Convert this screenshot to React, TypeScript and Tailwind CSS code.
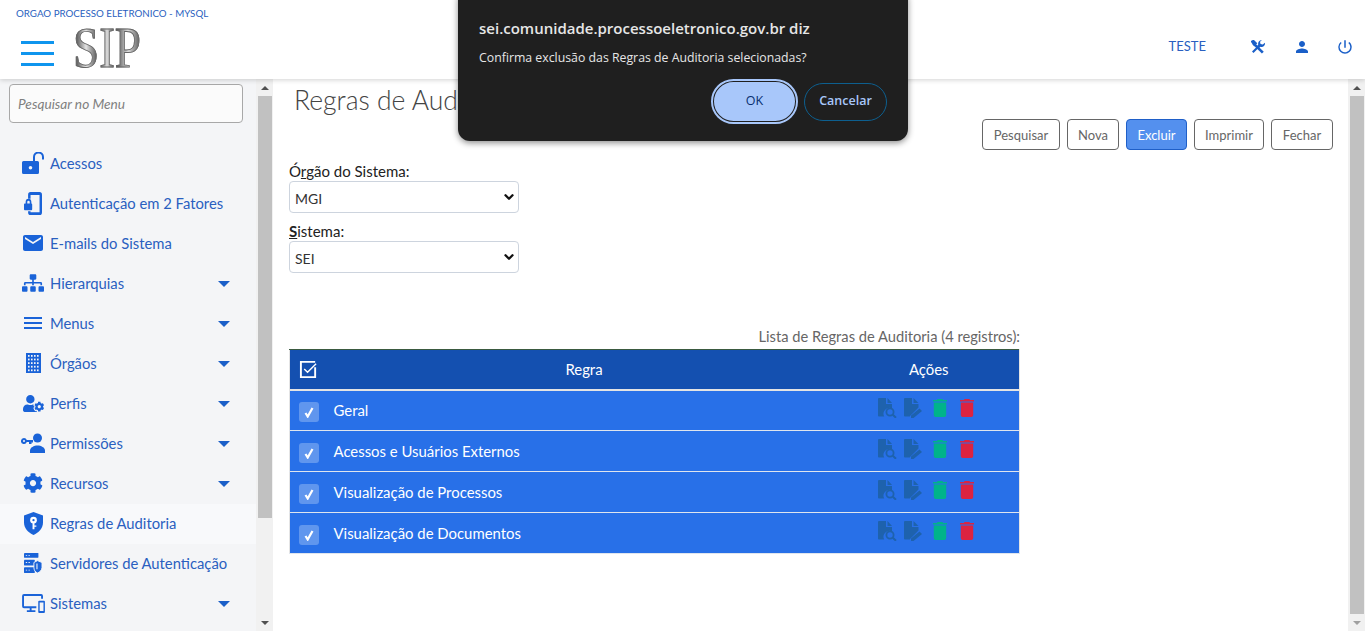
import { ReactNode } from 'react'
import { FaCog, FaSitemap, FaUserCog } from 'react-icons/fa'
import { MdEmail, MdMenu, MdPerson, MdPowerSettingsNew } from 'react-icons/md'
import { ChevronDown } from 'lucide-react'

const font = "font-['Lato','Open_Sans',sans-serif]"

function LockOpen() {
  return (
    <svg viewBox="0 0 22 22" className="w-[22px] h-[22px]" fill="#1a63d8">
      <path fillRule="evenodd" d="M1.500 9h14a1.500 1.500 0 0 1 1.500 1.500v10a1.500 1.500 0 0 1-1.500 1.500h-14A1.500 1.500 0 0 1 0 20.500v-10A1.500 1.500 0 0 1 1.500 9zm7 5a1.800 1.800 0 1 0 0 3.600 1.800 1.800 0 0 0 0-3.600z" />
      <path d="M11 9V5a5.500 5.500 0 0 1 11 0v2.500h-2V5a3.500 3.500 0 0 0-7 0v4z" />
    </svg>
  )
}

function PhoneLock() {
  return (
    <svg viewBox="0 0 22 24" className="w-[18px] h-[23px]" preserveAspectRatio="none" fill="#1a63d8">
      <path d="M8 0h11a3 3 0 0 1 3 3v18a3 3 0 0 1-3 3H8a3 3 0 0 1-3-3v-1h3v1h11V3H8v4H5V3a3 3 0 0 1 3-3z" />
      <path d="M2 12V10.500a3.500 3.500 0 0 1 7 0V12a1 1 0 0 1 1 1v5a1 1 0 0 1-1 1H1a1 1 0 0 1-1-1v-5a1 1 0 0 1 1-1zm2 0h3v-1.500a1.500 1.500 0 0 0-3 0z" />
    </svg>
  )
}

function Building() {
  const cells = [] as ReactNode[]
  for (let row = 0; row < 5; row++) {
    for (let col = 0; col < 4; col++) {
      cells.push(<rect key={`${row}-${col}`} x={2 + col * 3} y={2 + row * 3.600} width="1.600" height="1.800" fill="#f4f5f7" />)
    }
  }
  return (
    <svg viewBox="0 0 15 20" className="w-[15px] h-[20px]">
      <rect width="15" height="20" fill="#1a63d8" />
      {cells}
    </svg>
  )
}

function UserKey() {
  return (
    <svg viewBox="0 0 24 20" className="w-[24px] h-[20px]" fill="#1a63d8">
      <circle cx="16.500" cy="5" r="4.500" />
      <path d="M9 20v-2.500c0-3 4-5 7.500-5s7.500 2 7.500 5V20z" />
      <path fillRule="evenodd" d="M3 5a3 3 0 0 1 2.800 2H12v2.500h-1.500V11H8V9H5.800A3 3 0 1 1 3 5zm0 2a1 1 0 1 0 0 2 1 1 0 0 0 0-2z" />
    </svg>
  )
}

function ShieldKey() {
  return (
    <svg viewBox="0 0 20 24" className="w-[19px] h-[23px]">
      <path fill="#1a63d8" d="M10 0l10 3.500v7.500c0 6-4.300 10.800-10 13C4.300 21.800 0 17 0 11V3.500z" />
      <circle cx="10" cy="8.500" r="3.500" fill="#fff" />
      <circle cx="10" cy="8.500" r="1.200" fill="#1a63d8" />
      <path fill="#fff" d="M9 11h2v7H9z M11 14h2v1.500h-2z" />
    </svg>
  )
}

function Servers() {
  return (
    <svg viewBox="0 0 20 21" className="w-[18px] h-[20px]" preserveAspectRatio="none" fill="#1a63d8">
      <rect x="0" y="0" width="16" height="5" rx="0.500" />
      <rect x="0" y="7" width="12" height="6" rx="0.500" />
      <rect x="0" y="15" width="12" height="6" rx="0.500" />
      <path d="M15 8l5 2v5c0 3-2.300 5-5 6-2.700-1-4-3-4-6v-5z" stroke="#f4f5f7" strokeWidth="1" />
      <path fill="#f4f5f7" d="M2 2h1.500v1H2zM5 2h1.500v1H5zM2 9.500h1.500v1H2zM5 9.500h1.500v1H5zM2 17.500h1.500v1H2zM5 17.500h1.500v1H5z" />
      <path fill="#f4f5f7" d="M15 11v6h-1.200v-6z" />
    </svg>
  )
}

function Devices() {
  return (
    <svg viewBox="0 0 24 20" className="w-[23px] h-[19px]" fill="#1a63d8">
      <path d="M2 0h18a2 2 0 0 1 2 2v3h-2V2H2v11h13v2H10v2h4v2H5v-2h3v-2H2a2 2 0 0 1-2-2V2a2 2 0 0 1 2-2z" />
      <path fillRule="evenodd" d="M18 7h5a1 1 0 0 1 1 1v11a1 1 0 0 1-1 1h-5a1 1 0 0 1-1-1V8a1 1 0 0 1 1-1zm.500 2v9h4V9z" />
    </svg>
  )
}

function Tools() {
  return (
    <svg viewBox="0 0 16 16" className="w-[14px] h-[14px]" fill="none" stroke="#1a5fc8">
      <path strokeWidth="3" d="M2.500 3.500l11 11" />
      <path strokeWidth="2.500" d="M2 14L10 6" />
      <path strokeWidth="2" d="M.8 1.800l2-1 3 3-2 2z" fill="#1a5fc8" />
      <path fill="#1a5fc8" strokeWidth="0" d="M12 .2a3.800 3.800 0 0 0-3.700 4.800L7 7l2 2 2-1.300A3.800 3.800 0 0 0 15.800 3l-2.300 2.200-2.600-.7-.6-2.500L12.500.3z" />
    </svg>
  )
}

function FileSearch() {
  return (
    <svg viewBox="0 0 20 20" className="w-[20px] h-[20px]">
      <path fill="#1e62ad" d="M2 0h7v6h6v4.300a6 6 0 0 0-7.800 8.200H2a1 1 0 0 1-1-1V1a1 1 0 0 1 1-1zM10.500 0L15 5h-4.500z" />
      <circle cx="13" cy="14" r="3.600" fill="none" stroke="#1e62ad" strokeWidth="1.800" />
      <path stroke="#1e62ad" strokeWidth="2" d="M15.800 16.800l3.200 3" />
    </svg>
  )
}

function FileEdit() {
  return (
    <svg viewBox="0 0 19 20" className="w-[19px] h-[20px]">
      <path fill="#1e62ad" d="M1 0h7v6h6.500v3.500L6 18v.5H1a1 1 0 0 1-1-1V1a1 1 0 0 1 1-1zM9.500 0L14.500 5h-5z" />
      <path fill="#1e62ad" d="M15.500 10.500l2.500 2.500L9.500 20H7v-2.500z" />
    </svg>
  )
}

function Trash({ color }: { color: string }) {
  return (
    <svg viewBox="0 0 14 18" className="w-[14px] h-[18px]" fill={color}>
      <path d="M4.500 0h5l.5 1h4v1.500H0V1h4z" />
      <path d="M.8 3.500h12.400V16a2 2 0 0 1-2 2H2.800a2 2 0 0 1-2-2z" />
    </svg>
  )
}

function Caret() {
  return <div className="w-0 h-0 border-l-[6px] border-r-[6px] border-t-[6px] border-l-transparent border-r-transparent border-t-[#1a5fc8] mr-[26px] mb-[1px]" />
}

const menu: { label: string; icon: ReactNode; caret?: boolean; active?: boolean }[] = [
  { label: 'Acessos', icon: <LockOpen /> },
  { label: 'Autenticação em 2 Fatores', icon: <PhoneLock /> },
  { label: 'E-mails do Sistema', icon: <MdEmail size={24} color="#1a63d8" /> },
  { label: 'Hierarquias', icon: <FaSitemap size={22} color="#1a63d8" />, caret: true },
  { label: 'Menus', icon: <MdMenu size={24} color="#1a63d8" />, caret: true },
  { label: 'Órgãos', icon: <Building />, caret: true },
  { label: 'Perfis', icon: <FaUserCog size={21} color="#1a63d8" />, caret: true },
  { label: 'Permissões', icon: <UserKey />, caret: true },
  { label: 'Recursos', icon: <FaCog size={20} color="#1a63d8" />, caret: true },
  { label: 'Regras de Auditoria', icon: <ShieldKey />, active: true },
  { label: 'Servidores de Autenticação', icon: <Servers /> },
  { label: 'Sistemas', icon: <Devices />, caret: true },
]

const rules = ['Geral', 'Acessos e Usuários Externos', 'Visualização de Processos', 'Visualização de Documentos']

const buttons = [
  { label: 'Pesquisar', width: 'w-[78px]' },
  { label: 'Nova', width: 'w-[52px]' },
  { label: 'Excluir', width: 'w-[61px]' },
  { label: 'Imprimir', width: 'w-[70px]' },
  { label: 'Fechar', width: 'w-[62px]' },
]

function Scrollbar({ thumb, arrow }: { thumb: string; arrow: string }) {
  return (
    <div className="w-[17px] shrink-0 bg-[#f1f1f1] flex flex-col items-center">
      <div className="h-[17px] flex items-center justify-center shrink-0">
        <div className="w-0 h-0 border-l-[4px] border-r-[4px] border-b-[4px] border-l-transparent border-r-transparent border-b-[#505050]" />
      </div>
      <div className={`w-[14px] bg-[#c1c1c1] ${thumb}`} />
      <div className="flex-1" />
      <div className="h-[17px] flex items-center justify-center shrink-0">
        <div className={`w-0 h-0 border-l-[4px] border-r-[4px] border-t-[4px] border-l-transparent border-r-transparent ${arrow}`} />
      </div>
    </div>
  )
}

export default function App() {
  return (
    <div className={`${font} h-screen w-full overflow-hidden flex flex-col bg-white relative`}>
      <header className="h-[79px] shrink-0 bg-white shadow-[0_1px_5px_rgba(0,0,0,0.18)] z-10 flex flex-col">
        <div className="pl-[16px] pt-[6px] text-[9.750px] leading-[14px] text-[#2a5fc0]">ORGAO PROCESSO ELETRONICO - MYSQL</div>
        <div className="flex items-center flex-1 pb-[6px]">
          <div className="ml-[21px] mt-[14px] w-[33px] flex flex-col gap-[7.500px]">
            <div className="h-[3.500px] bg-[#0f95ee]" />
            <div className="h-[3.500px] bg-[#0f95ee]" />
            <div className="h-[3.500px] bg-[#0f95ee]" />
          </div>
          <div className="ml-[19px] mt-[3px] flex font-['Liberation_Serif',serif] text-[47px] leading-[40px] scale-y-[1.2] text-transparent [-webkit-text-stroke:0.7px_#666]">
            <span className="bg-clip-text bg-gradient-to-r from-[#333] via-[#e4e4e4] to-[#444]">S</span>
            <span className="bg-clip-text bg-gradient-to-r from-[#555] via-[#ddd] to-[#555]">I</span>
            <span className="bg-clip-text bg-gradient-to-r from-[#444] via-[#ddd] to-[#555]">P</span>
          </div>
          <div className="flex-1" />
          <span className="text-[13px] text-[#2a5fc0]">TESTE</span>
          <div className="ml-[45px]"><Tools /></div>
          <div className="ml-[28px]"><MdPerson size={18} color="#1a5fc8" /></div>
          <div className="ml-[25px] mr-[11px]"><MdPowerSettingsNew size={18} color="#1a5fc8" /></div>
        </div>
      </header>

      <div className="flex-1 flex min-h-0">
        <aside className="w-[256px] shrink-0 bg-[#f4f5f7] flex flex-col overflow-hidden">
          <div className="pl-[9px] pr-[13px] pt-[5px]">
            <div className="h-[39px] border border-[#a8a8a8] rounded-[4px] bg-[#fbfbfb] flex items-center px-[8px] pt-[2px] text-[13.700px] italic text-[#808080]">Pesquisar no Menu</div>
          </div>
          <nav className="mt-[21px] flex flex-col">
            {menu.map((m) => (
              <div key={m.label} className={`h-[40px] shrink-0 flex items-center ${m.active ? 'bg-[#f8f9fb]' : ''}`}>
                <div className="w-[50px] pl-[16px] pb-[2px] flex items-center justify-center shrink-0">{m.icon}</div>
                <span className="flex-1 pb-[2px] text-[14.800px] text-[#2a5fc0]">{m.label}</span>
                {m.caret && <Caret />}
              </div>
            ))}
          </nav>
        </aside>
        <Scrollbar thumb="h-[422px]" arrow="border-t-[#505050]" />

        <main className="flex-1 min-w-0 flex flex-col pl-[16px] pr-[15px]">
          <h1 className="pl-[5px] pt-[5px] text-[26.500px] leading-[32px] font-light text-[#444]">Regras de Auditoria</h1>
          <div className="mt-[3px] flex justify-end gap-[7px] text-[13px]">
            {buttons.map((b) => (
              <button
                key={b.label}
                className={`h-[31px] pt-[2px] ${b.width} rounded-[4px] border ${
                  b.label === 'Excluir' ? 'bg-[#5490ee] border-[#1f5fc8] text-white' : 'bg-white border-[#666] text-[#666]'
                }`}
              >
                {b.label}
              </button>
            ))}
          </div>
          <label className="mt-[12px] text-[15px] leading-[18px] text-[#222]">
            Ó<span className="underline">r</span>gão do Sistema:
          </label>
          <div className="mt-[1px] w-[230px] h-[32px] border border-[#cdd4de] rounded-[4px] flex items-center justify-between pl-[5px] pr-[2px] text-[14px] text-[#333]">
            <span className="pt-[2px]">MGI</span>
            <ChevronDown size={14} strokeWidth={4} color="#111" />
          </div>
          <label className="mt-[9px] text-[15px] leading-[18px] text-[#222]">
            <span className="underline font-bold">S</span>istema:
          </label>
          <div className="mt-[1px] w-[230px] h-[32px] border border-[#cdd4de] rounded-[4px] flex items-center justify-between pl-[5px] pr-[2px] text-[14px] text-[#333]">
            <span className="pt-[2px]">SEI</span>
            <ChevronDown size={14} strokeWidth={4} color="#111" />
          </div>

          <div className="mt-[54px] w-[731px] text-right text-[14.700px] leading-[18px] text-[#666] pb-[4px]">Lista de Regras de Auditoria (4 registros):</div>
          <table className="w-[731px] border-collapse border-t border-x border-t-[#3a5a40] border-x-[#e4e4e4] text-white text-[14.900px]">
            <thead>
              <tr className="h-[40px] bg-[#1450b0] border-b-[2px] border-[#e4e4e4]">
                <th className="w-[40px] pl-[9px] font-normal text-left">
                  <svg viewBox="0 0 20 20" className="w-[19px] h-[19px]" fill="none" stroke="#fff" strokeWidth="2">
                    <path d="M17 7.500V18H2V2h15" />
                    <path strokeWidth="1.500" d="M5.500 9.500l3.500 3.500 9-9" />
                  </svg>
                </th>
                <th className="font-normal text-center">Regra</th>
                <th className="w-[181px] font-normal text-center">Ações</th>
              </tr>
            </thead>
            <tbody>
              {rules.map((r) => (
                <tr key={r} className="h-[41px] bg-[#2870e8] border-b border-[#dfe5ee]">
                  <td className="pl-[9px]">
                    <div className="w-[20px] h-[20px] mt-[3px] rounded-[3px] bg-[#6096ee] flex items-center justify-center">
                      <svg viewBox="0 0 12 12" className="w-[12px] h-[12px]" fill="none" stroke="#fff" strokeWidth="2.200">
                        <path d="M2.500 7l2.200 3.500L9.500 2" />
                      </svg>
                    </div>
                  </td>
                  <td className="pl-[4px]">{r}</td>
                  <td>
                    <div className="flex items-center pl-[38px] pb-[4px]">
                      <FileSearch />
                      <div className="ml-[7px]"><FileEdit /></div>
                      <div className="ml-[10px]"><Trash color="#00b38a" /></div>
                      <div className="ml-[13px]"><Trash color="#dc2340" /></div>
                    </div>
                  </td>
                </tr>
              ))}
            </tbody>
          </table>
        </main>
        <Scrollbar thumb="h-[518px]" arrow="border-t-[#a0a0a0]" />
      </div>

      <div className="absolute z-20 left-[458px] top-[-12px] w-[450px] h-[153px] rounded-[12px] bg-[#1f1f1f] shadow-[0_2px_6px_rgba(0,0,0,0.45)] font-['Open_Sans',sans-serif] px-[21px] pt-[28px]">
        <div className="text-[15px] leading-[24px] font-semibold text-[#e6e6e6]">sei.comunidade.processoeletronico.gov.br diz</div>
        <div className="mt-[8px] text-[12.300px] leading-[20px] text-[#e6e6e6]">Confirma exclusão das Regras de Auditoria selecionadas?</div>
        <div className="mt-[12px] flex justify-end items-center gap-[7px]">
          <button className="w-[85px] h-[43px] rounded-full bg-[#a8c7fa] text-[#062e6f] text-[12.500px] font-medium border-[2px] border-[#1f1f1f] outline outline-2 outline-[#a8c7fa] -outline-offset-1">OK</button>
          <button className="w-[83px] h-[38px] rounded-full border border-[#0d5f8f] text-[#a8c7fa] text-[12.500px] font-semibold">Cancelar</button>
        </div>
      </div>
    </div>
  )
}
